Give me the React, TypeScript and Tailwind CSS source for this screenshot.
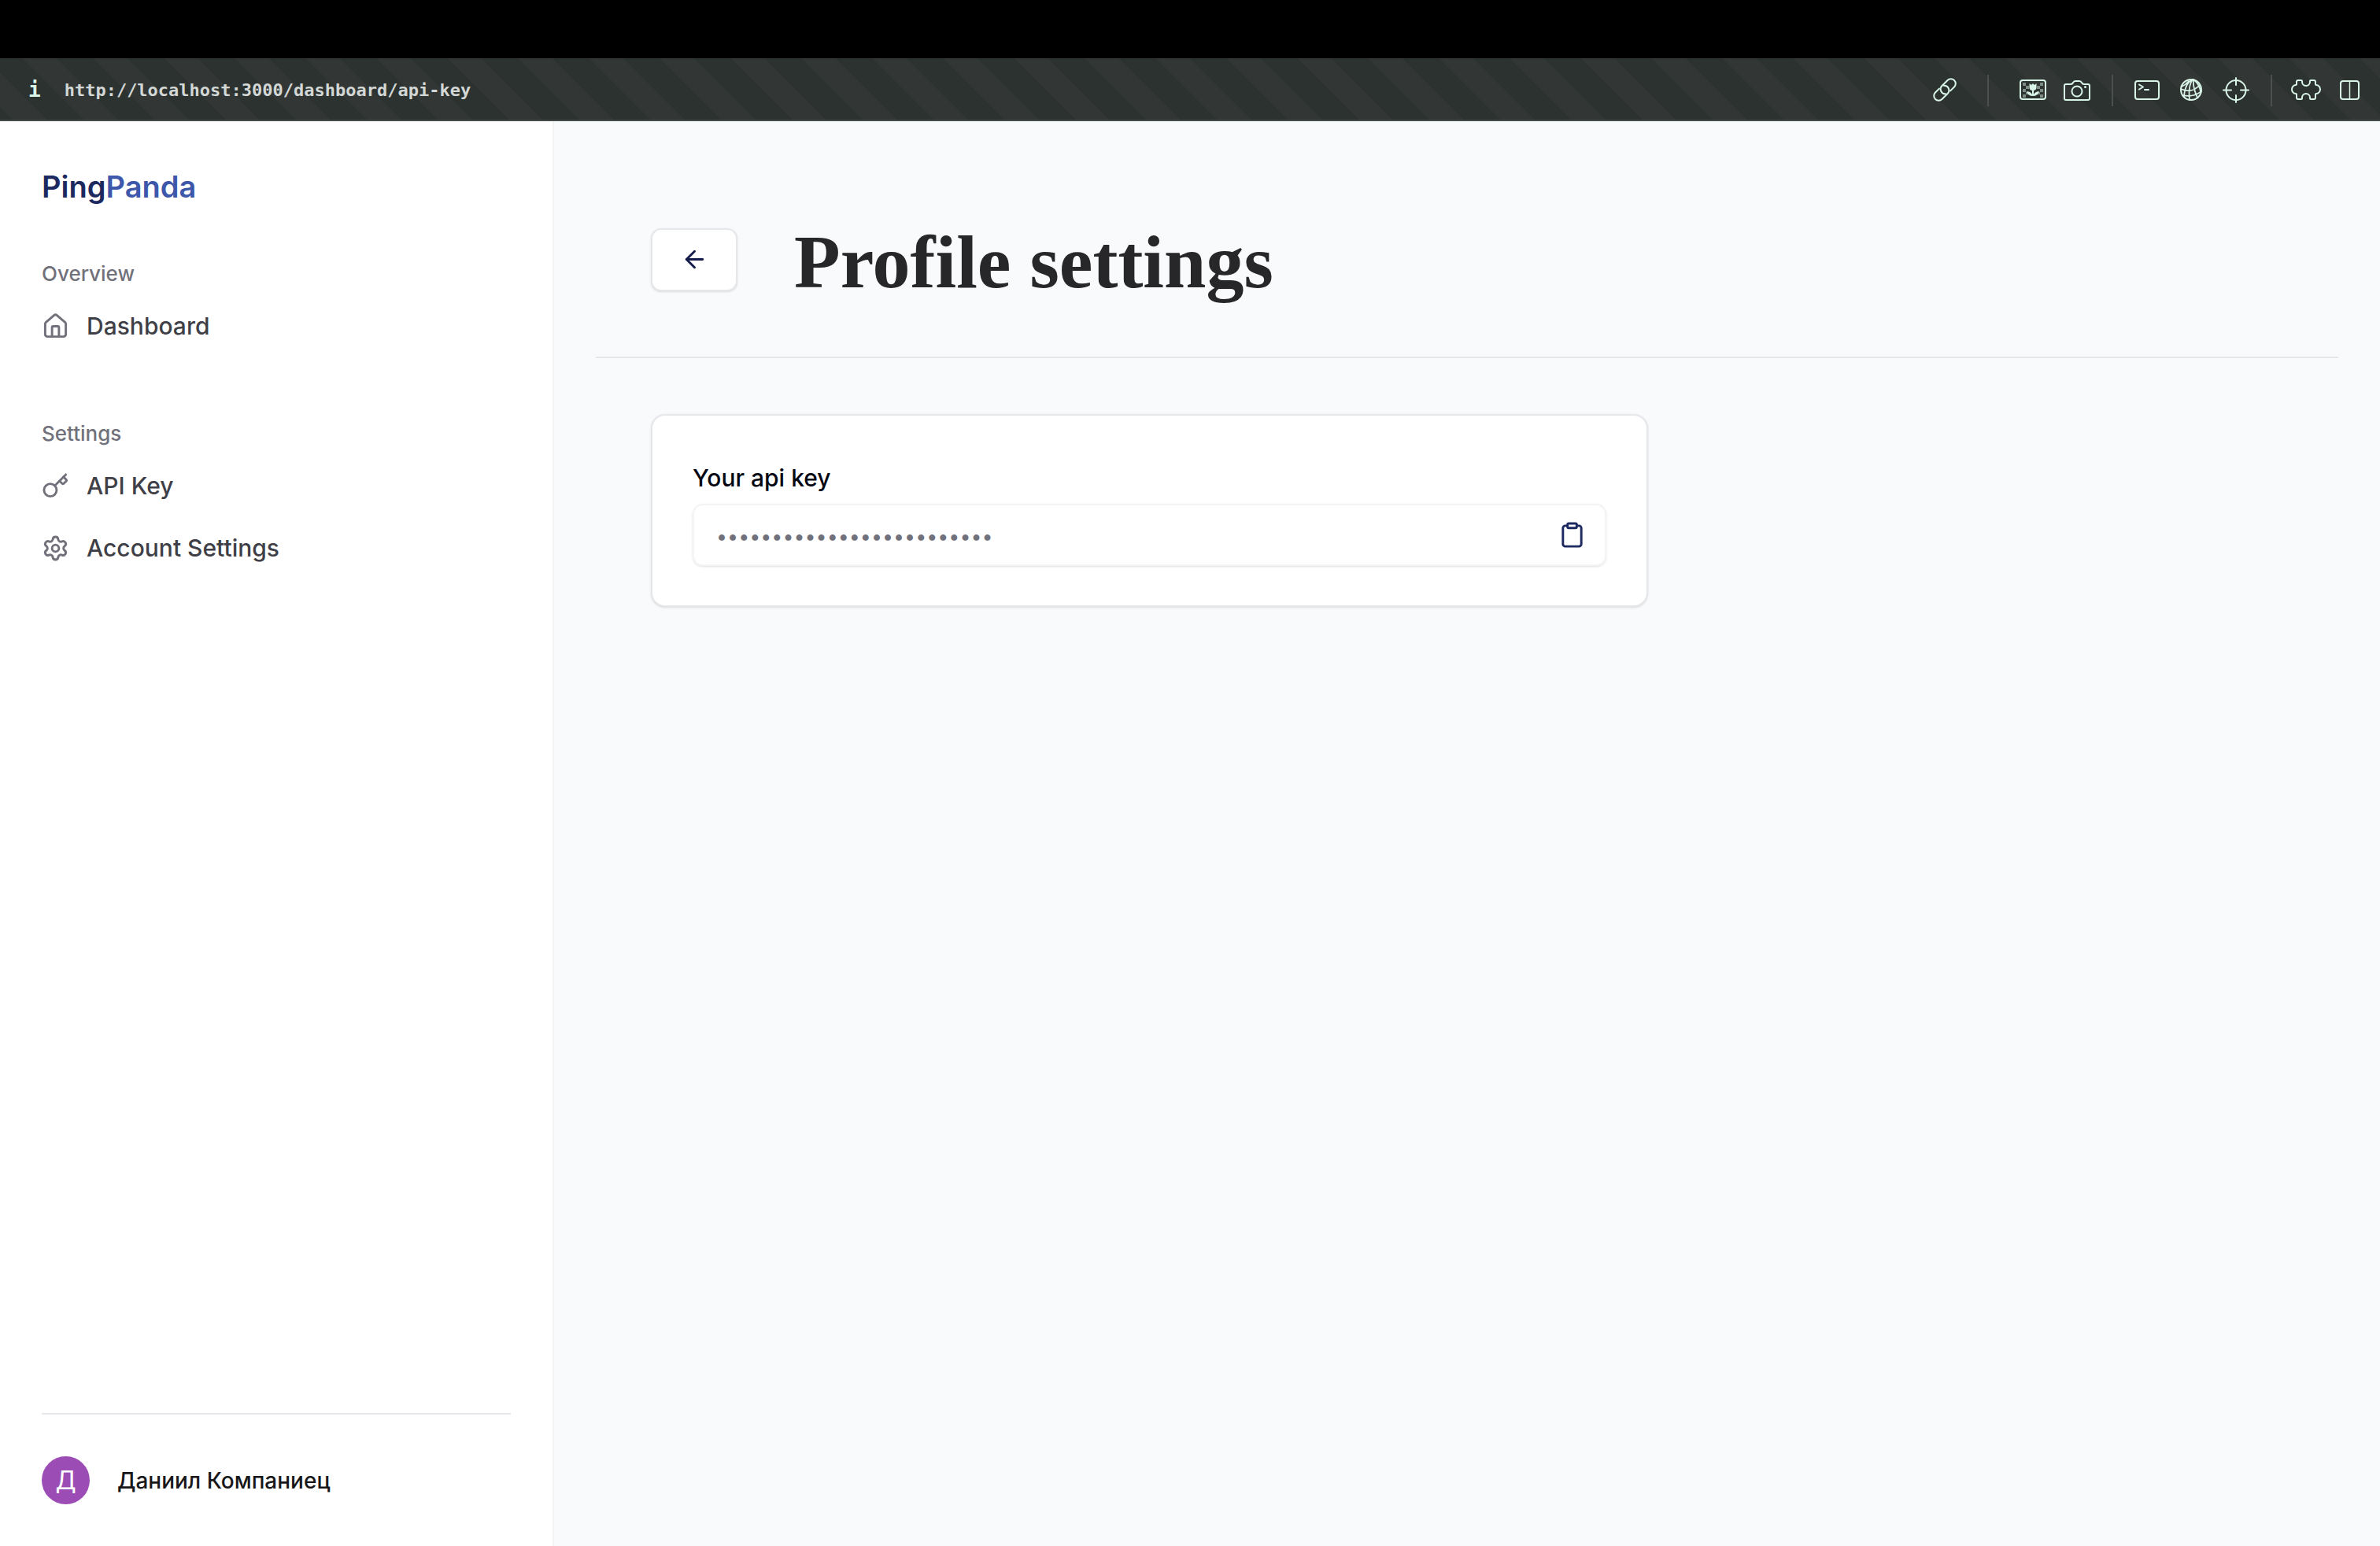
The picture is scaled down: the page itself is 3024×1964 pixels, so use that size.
import { ArrowLeft, Clipboard, House, Key, Settings } from "lucide-react";
import type { ReactNode } from "react";

const strokeProps = {
  fill: "none",
  stroke: "currentColor",
  strokeWidth: 2,
  strokeLinecap: "round" as const,
  strokeLinejoin: "round" as const,
};

function ToolButton({ label, width, children }: { label: string; width: number; children: ReactNode }) {
  return (
    <button type="button" aria-label={label} className="flex shrink-0 items-center justify-center">
      <svg width={width} height={34} viewBox={`0 0 ${width} 34`} {...strokeProps}>
        {children}
      </svg>
    </button>
  );
}

function Divider() {
  return <span className="h-10 w-0.5 shrink-0 bg-[#4b504f]" />;
}

function BrowserBar() {
  return (
    <header className="flex h-20 items-center justify-between border-b-2 border-[#434a48] bg-[#2c3230] bg-[linear-gradient(45deg,transparent_16%,#323735_16%_40%,transparent_40%_66%,#323735_66%_90%,transparent_90%)] bg-[length:90px_90px] pt-[3px] pr-[26px] pl-9 font-['DejaVu_Sans_Mono',monospace] text-[22px] font-bold text-[#d3d7d5]">
      <div className="flex items-center gap-[30px]">
        <button type="button" aria-label="Site information" className="text-[26px] text-[#d9f5e8]">
          i
        </button>
        <span>http://localhost:3000/dashboard/api-key</span>
      </div>
      <div className="flex items-center gap-[27px] text-[#d9f5e8]">
        <div className="flex items-center gap-[39px]">
          <ToolButton label="Copy link" width={30}>
            <g transform="translate(15 16) rotate(-45)">
              <path d="M4 6H11a6 6 0 0 0 0-12H1A6 6 0 0 0-3 4.500" />
              <path d="M-4-6H-11a6 6 0 0 0 0 12H-1A6 6 0 0 0 3-4.500" />
            </g>
          </ToolButton>
          <Divider />
          <div className="flex items-center gap-[22px]">
            <ToolButton label="Capture page" width={34}>
              <rect x="1" y="4" width="32" height="24" rx="3" />
              <path
                d="M4 7h4v4H4zM8 11h4v4H8zM4 15h4v4H4zM8 19h4v3H8zM4 22h4v4H4zM26 7h4v4h-4zM22 11h4v4h-4zM26 15h4v4h-4zM22 19h4v3h-4zM26 22h4v4h-4z"
                fill="#7d8c86"
                stroke="none"
              />
              <path d="M12.500 8l2.500 2 2-2 2 2 2.500-2v5q0 4-4.500 4t-4.500-4z" fill="currentColor" stroke="none" />
              <path d="M17 24q-6 0-8-6 6 0 8 6q2-6 8-6-2 6-8 6" fill="currentColor" stroke="none" />
              <path d="M17 16v7" />
            </ToolButton>
            <ToolButton label="Take screenshot" width={34}>
              <path d="M3 9h6q2 0 3-2t3-2h5q2 0 3 2t3 2h5q2 0 2 2v16q0 2-2 2H3q-2 0-2-2V11q0-2 2-2z" />
              <circle cx="17" cy="18" r="6.500" />
              <circle cx="27.500" cy="12.500" r="1.500" fill="currentColor" stroke="none" />
            </ToolButton>
          </div>
        </div>
        <Divider />
        <div className="flex items-center gap-[26px]">
          <ToolButton label="Console" width={32}>
            <rect x="1" y="5" width="30" height="23" rx="3" />
            <path d="M6 9.500l5 3-5 3M13 16h5" />
          </ToolButton>
          <ToolButton label="Network" width={28}>
            <circle cx="14" cy="16" r="13" />
            <path
              d="M16 3Q6 8 5 25M16 3q-6 8-4 26M17 3q-1 10 5 23M17 3q8 6 9 16M2 12q5-2 9-7M1 15q14 6 24-5M3 23q14 3 24-5"
              strokeWidth="1.750"
            />
          </ToolButton>
          <ToolButton label="Inspect" width={34}>
            <circle cx="17" cy="16.500" r="12.500" />
            <path d="M17 1v9M17 23v9M1 16.500h10M23 16.500h10" />
          </ToolButton>
        </div>
        <div className="flex items-center gap-6">
          <Divider />
          <ToolButton label="Extensions" width={38}>
            <path d="M9 4h4q1 0 1 1v1a5 5 0 0 0 10 0v-1q0-1 1-1h4q2 0 2 2v3q0 1 1 1a5 5.500 0 0 1 0 11q-1 0-1 1v4q0 2-2 2h-4q-1 0-1-1v-1a5 5 0 0 0-10 0v1q0 1-1 1h-4q-2 0-2-2v-4q0-1-1-1a5 5.500 0 0 1 0-11q1 0 1-1v-3q0-2 2-2z" />
          </ToolButton>
          <ToolButton label="Split view" width={25}>
            <rect x="1" y="5" width="23" height="23" rx="3" />
            <path d="M12.500 5v23" strokeWidth="1.500" />
          </ToolButton>
        </div>
      </div>
    </header>
  );
}

function NavLink({ icon, children }: { icon: ReactNode; children: ReactNode }) {
  return (
    <a href="#" className="flex items-center gap-[22px] py-[13px] text-[30px] leading-[53px] font-medium text-zinc-700">
      <span className="text-zinc-500">{icon}</span>
      {children}
    </a>
  );
}

function Sidebar() {
  return (
    <aside className="flex w-[704px] shrink-0 flex-col border-r-2 border-gray-100 bg-white p-[53px]">
      <p className="text-[38px] leading-[61px] font-semibold text-[#1d2a60]">
        Ping<span className="text-[#3d58ab]">Panda</span>
      </p>
      <nav className="mt-[53px] flex grow flex-col gap-[70px]">
        <section>
          <h2 className="text-[26px] leading-[54px] font-medium text-zinc-500">Overview</h2>
          <NavLink icon={<House size={35} />}>Dashboard</NavLink>
        </section>
        <section>
          <h2 className="text-[26px] leading-[54px] font-medium text-zinc-500">Settings</h2>
          <NavLink icon={<Key size={35} />}>API Key</NavLink>
          <NavLink icon={<Settings size={35} />}>Account Settings</NavLink>
        </section>
      </nav>
      <hr className="mb-[53px] border-t-2 border-gray-200" />
      <button type="button" className="flex items-center gap-[35px] text-left text-[28px] font-medium text-zinc-900">
        <span className="flex size-[61px] items-center justify-center rounded-full bg-[#9c4db5] text-[32px] font-normal text-white">
          Д
        </span>
        Даниил Компаниец
      </button>
    </aside>
  );
}

export default function App() {
  return (
    <div className="flex min-h-screen flex-col bg-white font-['Inter',sans-serif]">
      <div className="h-[74px] bg-black" />
      <BrowserBar />
      <div className="flex grow">
        <Sidebar />
        <main className="grow bg-[#f9fafc] px-[53px] pt-[114px]">
          <div className="flex items-center gap-[72px] border-b-2 border-gray-200 px-[70px] pb-[62px]">
            <button
              type="button"
              aria-label="Back"
              className="flex h-20 w-[110px] items-center justify-center rounded-[13px] border-2 border-gray-200 bg-white text-[#141c4c] shadow-sm"
            >
              <ArrowLeft size={35} />
            </button>
            <h1 className="pt-1.5 font-['Liberation_Serif',serif] text-[96px] leading-[117px] font-bold text-zinc-800">
              Profile settings
            </h1>
          </div>
          <div className="px-[70px] pt-[71px]">
            <section className="flex max-w-[1267px] flex-col gap-1.5 rounded-[18px] border-2 border-gray-200 bg-white px-[51px] pt-[53px] pb-[50px] shadow-sm">
              <label htmlFor="api-key" className="text-[30px] leading-[53px] font-medium text-gray-950">
                Your api key
              </label>
              <div className="flex h-[79px] items-center rounded-[13px] border-2 border-zinc-100 pr-6 pl-7 shadow-sm">
                <input
                  id="api-key"
                  type="password"
                  readOnly
                  defaultValue="0123456789012345678901234"
                  className="grow bg-transparent pt-1 text-[25px] text-zinc-500 outline-none"
                />
                <button type="button" aria-label="Copy API key" className="text-[#1d2a60]">
                  <Clipboard size={35} />
                </button>
              </div>
            </section>
          </div>
        </main>
      </div>
    </div>
  );
}
